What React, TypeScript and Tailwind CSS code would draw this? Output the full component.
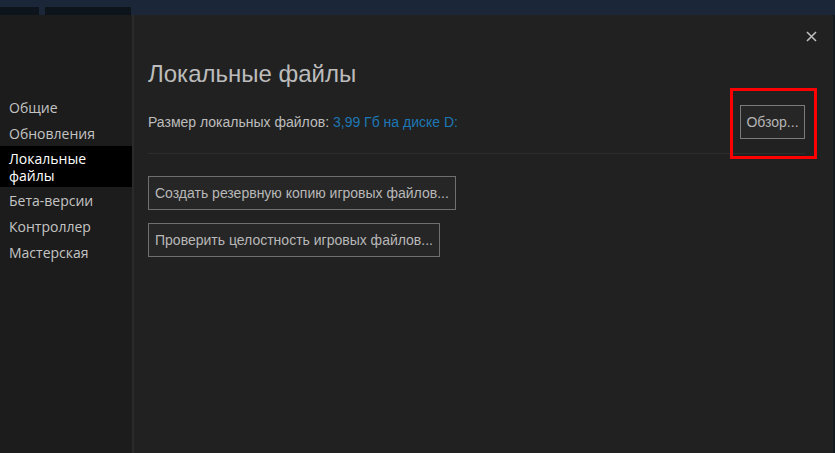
const NAV = ["Общие", "Обновления", "Локальные файлы", "Бета-версии", "Контроллер", "Мастерская"];

function CloseIcon() {
  return (
    <svg className="h-[11px] w-[11px]" viewBox="0 0 11 11" fill="none" stroke="#bdbdbd" strokeWidth="1.6" aria-hidden>
      <path d="M1 1l9 9M10 1l-9 9" />
    </svg>
  );
}

export default function App() {
  return (
    <div className="flex h-[453px] w-[835px] flex-col overflow-hidden bg-[#212121] font-['Liberation_Sans',Arial,sans-serif]">
      {/* top strip with window tabs */}
      <div className="flex h-[15px] shrink-0 items-end gap-[6px] bg-[#1b2738]">
        <div className="h-[8px] w-[39px] bg-[#0e141b]" />
        <div className="h-[8px] w-[86px] bg-[#0e141b]" />
      </div>

      <div className="flex min-h-0 flex-1">
        {/* sidebar */}
        <nav className="flex w-[132px] shrink-0 flex-col bg-[#1c1c1c] pt-[79px] font-['Open_Sans','Noto_Sans',sans-serif] text-[14px] leading-[17px] text-[#c4c4c4]">
          {NAV.map((item) =>
            item === "Локальные файлы" ? (
              <div key={item} className="bg-black py-[3.5px] pl-[9px] text-white">
                Локальные
                <br />
                файлы
              </div>
            ) : (
              <div key={item} className="py-[4.5px] pl-[9px]">
                {item}
              </div>
            )
          )}
        </nav>
        <div className="w-[2px] shrink-0 bg-[#2a2a2a]" />

        {/* main */}
        <main className="relative flex min-w-0 flex-1 flex-col pl-[14px] pr-[28px]">
          <button type="button" className="absolute right-[16px] top-[16px] p-0">
            <CloseIcon />
          </button>

          <h1 className="mt-[45px] text-[24px] leading-[28px] text-[#bcbcbc]">Локальные файлы</h1>

          <div className="mt-[17px] flex items-center justify-between">
            <p className="text-[14px] text-[#bdbdbd]">
              Размер локальных файлов: <span className="text-[#1d78b6]">3,99 Гб на диске D:</span>
            </p>
            <div className="relative">
              <button
                type="button"
                className="h-[34px] w-[65px] border border-[#7b7b7b] bg-[#262626] text-[14px] text-[#b5b5b5]"
              >
                Обзор...
              </button>
              <div className="pointer-events-none absolute left-[-10px] top-[-17px] h-[71px] w-[87px] border-[3px] border-[#ff0000]" />
            </div>
          </div>

          <div className="mt-[14px] h-px bg-[#2d2d2d]" />

          <div className="mt-[22px] flex flex-col items-start gap-[13px]">
            <button type="button" className="h-[34px] border border-[#6f6f6f] bg-[#262626] px-[6px] text-[14px] text-[#b8b8b8]">
              Создать резервную копию игровых файлов...
            </button>
            <button type="button" className="h-[34px] border border-[#6f6f6f] bg-[#262626] px-[6px] text-[14px] text-[#b8b8b8]">
              Проверить целостность игровых файлов...
            </button>
          </div>
        </main>
        <div className="w-[2px] shrink-0 bg-[#141a22]" />
      </div>
    </div>
  );
}
